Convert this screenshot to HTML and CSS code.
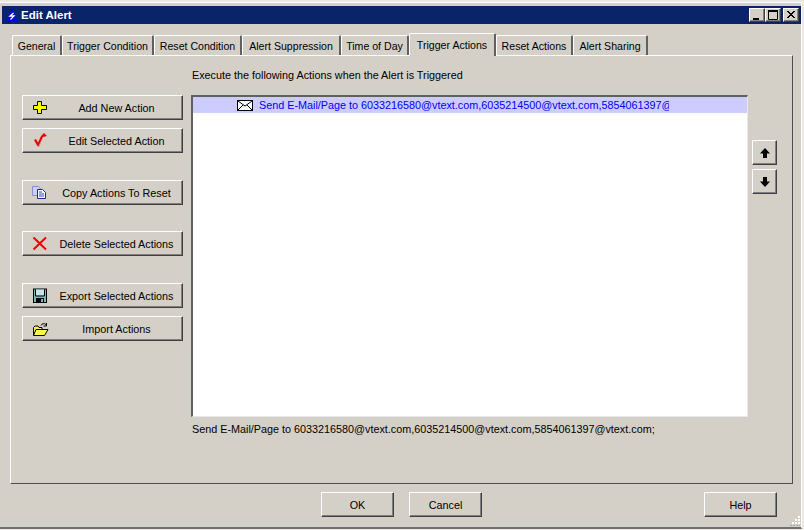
FILE: index.html
```html
<!DOCTYPE html>
<html lang="en">
<head>
<meta charset="utf-8">
<title>Edit Alert</title>
<link rel="stylesheet" href="styles.css">
</head>
<body>
<div class="window">
  <div class="titlebar">
    <svg class="app-icon" width="12" height="14" viewBox="0 0 12 14"><path d="M6 0 12 14H0Z" fill="#0606e8"/><path d="M7.500 5 4 8h4L4.500 11.500" fill="none" stroke="#fff" stroke-width="1.300"/></svg>
    <span class="title">Edit Alert</span>
    <div class="controls">
      <span class="ctl"><svg width="14" height="12" viewBox="0 0 14 12"><rect x="3" y="9" width="6" height="2" fill="#000"/></svg></span>
      <span class="ctl"><svg width="14" height="12" viewBox="0 0 14 12"><path d="M2.500 1.500h9v9h-9Z" fill="none" stroke="#000"/><rect x="2" y="1" width="10" height="2" fill="#000"/></svg></span>
      <span class="ctl ctl-close"><svg width="14" height="12" viewBox="0 0 14 12"><path d="M3 2l7 7M4 2l7 7M10 2l-7 7M11 2l-7 7" stroke="#000" fill="none"/></svg></span>
    </div>
  </div>
  <div class="tabs">
    <div class="tab w-general">General</div>
    <div class="tab w-tc">Trigger Condition</div>
    <div class="tab w-rc">Reset Condition</div>
    <div class="tab w-as">Alert Suppression</div>
    <div class="tab w-tod">Time of Day</div>
    <div class="tab tab-active w-ta">Trigger Actions</div>
    <div class="tab w-ra">Reset Actions</div>
    <div class="tab w-sh">Alert Sharing</div>
  </div>
  <div class="pane">
    <div class="actions">
      <button class="btn act"><svg class="ico" width="16" height="16" viewBox="0 0 16 16"><path d="M5.500 1.500h4V5.500H14.500V9.500H9.500V13.500H5.500V9.500H1.500V5.500H5.500Z" fill="#ffff00" stroke="#000"/></svg><span class="lbl">Add New Action</span></button>
      <button class="btn act gap-s"><svg class="ico" width="16" height="16" viewBox="0 0 16 16"><path d="M3.500 9l3 5 2-4" fill="none" stroke="#a0a0a0"/><path d="M2 7 4 6 6 9.500 9 3 12 0 15 3 11 4 6.500 13 5.500 13Z" fill="#f00000"/></svg><span class="lbl">Edit Selected Action</span></button>
      <button class="btn act gap-l"><svg class="ico" width="16" height="16" viewBox="0 0 16 16"><path d="M.5 1.500h6l2 2v7h-8Z" fill="#c8d0f8" stroke="#8890d0"/><path d="M5.500 4.500h5l3 3v6h-8Z" fill="#fff" stroke="#202890"/><path d="M7 7h3M7 9h5M7 11h5" stroke="#3040c0"/></svg><span class="lbl">Copy Actions To Reset</span></button>
      <button class="btn act gap-m"><svg class="ico" width="16" height="16" viewBox="0 0 16 16"><path d="M1.500 1.500 14 13.500M14 1.500 1.500 13.500" stroke="#f00000" stroke-width="2" fill="none"/></svg><span class="lbl">Delete Selected Actions</span></button>
      <button class="btn act gap-l"><svg class="ico" width="16" height="16" viewBox="0 0 16 16"><rect x="1.500" y="1" width="13" height="13.500" fill="#80b8b8" stroke="#000"/><rect x="4" y="1.500" width="8" height="6" fill="#c8e4e4"/><path d="M3.500 1.500v6.500h9V1.500" fill="none" stroke="#000"/><rect x="4" y="10" width="8" height="5" fill="#000"/><rect x="9" y="11" width="2" height="3" fill="#80b8b8"/></svg><span class="lbl">Export Selected Actions</span></button>
      <button class="btn act gap-s"><svg class="ico ico-wide" width="17" height="16" viewBox="0 0 17 16"><path d="M1.500 14.500V6.500L3 5h3l1 1.500h3v2" fill="#ffe860" stroke="#000"/><path d="M1.500 14.500 4 8.500H16L12.500 14.500Z" fill="#ffff40" stroke="#000"/><path d="M9 4.500C10 2.500 12 2 14 3.500M14.500 2v3h-3" fill="none" stroke="#000"/></svg><span class="lbl">Import Actions</span></button>
    </div>
    <div class="main">
      <p class="intro">Execute the following Actions when the Alert is Triggered</p>
      <div class="list-row">
        <div class="list">
          <div class="row">
            <svg class="env" width="16" height="11" viewBox="0 0 16 11"><rect x=".5" y=".5" width="15" height="10" fill="#fff" stroke="#000"/><path d="M1 1l7 5 7-5M1 10l5-5M15 10l-5-5" fill="none" stroke="#000"/></svg>
            <span class="row-text">Send E-Mail/Page to 6033216580@vtext.com,6035214500@vtext.com,5854061397@</span>
          </div>
        </div>
        <div class="arrows">
          <button class="btn arrow"><svg width="12" height="12" viewBox="0 0 12 12"><path d="M6 1 11 6.500H8V11H4V6.500H1Z" fill="#000"/></svg></button>
          <button class="btn arrow"><svg width="12" height="12" viewBox="0 0 12 12"><path d="M6 11 11 5.500H8V1H4V5.500H1Z" fill="#000"/></svg></button>
        </div>
      </div>
      <p class="summary">Send E-Mail/Page to 6033216580@vtext.com,6035214500@vtext.com,5854061397@vtext.com;</p>
    </div>
  </div>
  <div class="footer">
    <button class="btn foot">OK</button>
    <button class="btn foot foot-cancel">Cancel</button>
    <button class="btn foot foot-help">Help</button>
  </div>
  <svg class="grip" width="12" height="12" viewBox="0 0 12 12"><path d="M9 1h2v2H9ZM6 4h2v2H6ZM9 4h2v2H9ZM3 7h2v2H3ZM6 7h2v2H6ZM9 7h2v2H9Z" fill="#fff"/><path d="M1 10h2v1H1ZM4 10h2v1H4ZM7 10h2v1H7ZM10 10h1v1h-1Z" fill="#a8a49c"/></svg>
</div>
</body>
</html>
```
FILE: styles.css
```css
* { box-sizing: border-box; }
html, body { margin: 0; padding: 0; }
body {
  width: 804px;
  height: 530px;
  overflow: hidden;
  background: #ece9e2;
  font-family: "Liberation Sans", Arial, sans-serif;
  font-size: 10.800px;
  color: #000;
}
.window {
  position: relative;
  width: 802px;
  height: 527px;
  margin-top: 2px;
  padding-top: 3px;
  background: #d4d0c8;
  border-top: 1px solid #fff;
  border-right: 1px solid #fff;
  border-bottom: 2px solid #707070;
  display: flex;
  flex-direction: column;
}
.titlebar {
  display: flex;
  align-items: center;
  height: 18px;
  margin-left: 2px;
  padding: 0 2px 0 4px;
  background: #0a246a;
  color: #fff;
  font-weight: 700;
  font-size: 11.500px;
  flex: none;
}
.app-icon { margin-right: 3px; }
.controls { margin-left: auto; display: flex; }
.ctl {
  width: 16px;
  height: 14px;
  background: #d4d0c8;
  border: 1px solid;
  border-color: #fff #404040 #404040 #fff;
  box-shadow: inset -1px -1px #808080;
  display: flex;
  align-items: center;
  justify-content: center;
}
.ctl-close { margin-left: 2px; }
.ctl svg { flex: none; }
.tabs {
  display: flex;
  align-items: flex-end;
  height: 31px;
  flex: none;
  padding-left: 12px;
  position: relative;
  z-index: 1;
}
.tab {
  height: 20px;
  padding-top: 3px;
  line-height: 14px;
  text-align: center;
  white-space: nowrap;
  border-top: 1px solid #fff;
  border-left: 1px solid #fff;
  border-right: 2px solid #606060;
  border-radius: 2px 2px 0 0;
  font-size: 10.600px;
}
.tab-active {
  height: 23px;
  background: #d4d0c8;
  margin-bottom: -1px;
  padding-top: 4px;
}
.w-general { width: 50px; }
.w-tc { width: 92px; }
.w-rc { width: 88px; }
.w-as { width: 99px; }
.w-tod { width: 68px; }
.w-ta { width: 87px; }
.w-ra { width: 77px; }
.w-sh { width: 75px; }
.pane {
  display: flex;
  height: 429px;
  flex: none;
  margin: 0 8px 0 10px;
  padding-left: 11px;
  border: 1px solid;
  border-color: #fff #505050 #505050 #fff;
}
.actions {
  width: 161px;
  padding-top: 39px;
  display: flex;
  flex-direction: column;
  flex: none;
}
.btn {
  display: flex;
  align-items: center;
  justify-content: center;
  padding: 0;
  background: #d4d0c8;
  color: #000;
  font: inherit;
  border: 1px solid;
  border-color: #fff #404040 #404040 #fff;
  box-shadow: inset -1px -1px #808080;
}
.act { width: 161px; height: 25px; padding-left: 9px; flex: none; }
.gap-s { margin-top: 8px; }
.gap-m { margin-top: 26px; }
.gap-l { margin-top: 27px; }
.ico { flex: none; }
.ico-wide { margin-right: -1px; }
.lbl { flex: 1; text-align: center; padding-left: 3px; }
.main { margin-left: 8px; display: flex; flex-direction: column; }
.intro { margin: 12px 0 13px 1px; height: 14px; line-height: 14px; }
.list-row { display: flex; }
.list {
  width: 557px;
  height: 322px;
  background: #fff;
  border: 2px solid;
  border-color: #606060 #e8e8e8 #e8e8e8 #606060;
  border-right-width: 1px;
  border-bottom-width: 1px;
}
.row {
  display: flex;
  align-items: center;
  height: 16px;
  background: #ccccff;
  padding-left: 44px;
  color: #0000ff;
  white-space: nowrap;
}
.env { flex: none; margin-right: 6px; }
.row-text { width: 410px; overflow: hidden; }
.arrows { margin-left: 4px; padding-top: 45px; display: flex; flex-direction: column; gap: 4px; }
.arrow { width: 25px; height: 25px; }
.summary { margin: 5px 0 0 1px; white-space: nowrap; line-height: 14px; }
.footer { display: flex; padding: 8px 0 0 321px; }
.foot { width: 73px; height: 25px; }
.foot-cancel { margin-left: 15px; }
.foot-help { margin-left: 222px; }
.grip { position: absolute; right: 0; bottom: 0; }
```
